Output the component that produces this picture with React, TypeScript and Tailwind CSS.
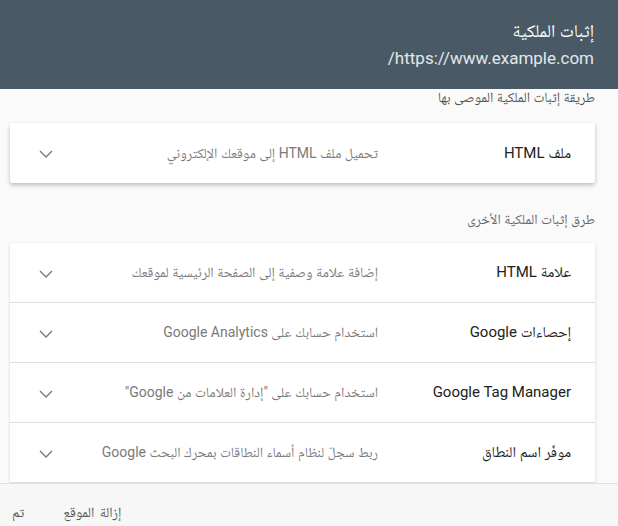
import React from "react";

const Chevron = () => (
  <svg width="24" height="24" viewBox="0 0 24 24" className="shrink-0">
    <polyline points="6,10 12,16 18,10" fill="none" stroke="#757575" strokeWidth="1.3" />
  </svg>
);

const Row = ({ title, desc, last }: { title: string; desc: string; last?: boolean }) => (
  <div className={"flex h-[60px] items-center pr-6 pl-6 " + (last ? "" : "border-b border-[#e0e0e0]")}>
    <div className="w-[193px] shrink-0 text-[15px] text-[#212121]">{title}</div>
    <div className="flex-1 text-[14px] text-[#7a7a7a]">{desc}</div>
    <Chevron />
  </div>
);

export default function App() {
  return (
    <div
      dir="rtl"
      className="flex h-[526px] w-[618px] flex-col overflow-hidden bg-[#fafafa]"
      style={{ fontFamily: "Roboto, 'Noto Naskh Arabic', 'Noto Sans Arabic', 'DejaVu Sans', sans-serif" }}
    >
      <header className="h-[89px] shrink-0 bg-[#495a66] px-6 pt-[19px]">
        <div className="text-[18px] leading-6 text-white">إثبات الملكية</div>
        <div className="mt-[3px] text-[17px] leading-6 text-[#e4e8eb]" dir="rtl">
          https://www.example.com/
        </div>
      </header>
      <main className="flex-1 overflow-hidden pl-[10px] pr-[23px]">
        <div className="h-4 text-[14px] leading-4 text-[#555]">طريقة إثبات الملكية الموصى بها</div>
        <div className="mt-[18px] rounded-[2px] bg-white shadow-[0_2px_4px_rgba(0,0,0,0.25)]">
          <Row title="ملف HTML" desc="تحميل ملف HTML إلى موقعك الإلكتروني" last />
        </div>
        <div className="mt-[28px] h-4 text-[14px] leading-4 text-[#666]">طرق إثبات الملكية الأخرى</div>
        <div className="mt-[16px] rounded-[2px] bg-white shadow-[0_1px_3px_rgba(0,0,0,0.18)]">
          <Row title="علامة HTML" desc="إضافة علامة وصفية إلى الصفحة الرئيسية لموقعك" />
          <Row title="إحصاءات Google" desc="استخدام حسابك على Google Analytics" />
          <Row title="Google Tag Manager" desc={'استخدام حسابك على "إدارة العلامات من Google"'} />
          <Row title="موفّر اسم النطاق" desc="ربط سجلّ لنظام أسماء النطاقات بمحرك البحث Google" />
        </div>
      </main>
      <footer className="flex h-[43px] shrink-0 items-center justify-end gap-[39px] border-t border-[#e0e0e0] bg-[#f7f7f7] pl-3 pt-[14px] text-[14px] text-[#555]">
        <span className="tracking-[1.3px] [word-spacing:2px]">إزالة الموقع</span>
        <span className="tracking-[1px]">تم</span>
      </footer>
    </div>
  );
}
